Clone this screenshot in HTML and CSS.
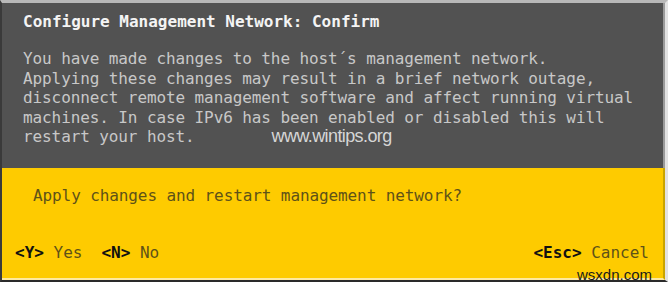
FILE: index.html
```html
<!DOCTYPE html>
<html lang="en">
<head>
    <meta charset="UTF-8">
    <title>Configure Management Network: Confirm</title>
    <link rel="stylesheet" href="styles.css">
</head>
<body>
    <div class="screen">
        <div class="info">
            <h1 class="title">Configure Management Network: Confirm</h1>
            <div class="message">
                <div>You have made changes to the host´s management network.</div>
                <div>Applying these changes may result in a brief network outage,</div>
                <div>disconnect remote management software and affect running virtual</div>
                <div>machines. In case IPv6 has been enabled or disabled this will</div>
                <div class="last">
                    <span>restart your host.</span>
                    <span class="mark">www.wintips.org</span>
                </div>
            </div>
        </div>
        <div class="confirm">
            <p class="question">Apply changes and restart management network?</p>
            <div class="actions">
                <div class="group">
                    <span class="action"><span class="key">&lt;Y&gt;</span> Yes</span>
                    <span class="action"><span class="key">&lt;N&gt;</span> No</span>
                </div>
                <span class="action"><span class="key">&lt;Esc&gt;</span> Cancel</span>
            </div>
            <div class="site">wsxdn.com</div>
        </div>
    </div>
</body>
</html>
```

FILE: styles.css
```css
* {
    box-sizing: border-box;
    margin: 0;
    padding: 0;
}
body {
    width: 668px;
    height: 282px;
    overflow: hidden;
    background: #2a2a2a;
    font-family: 'DejaVu Sans Mono', monospace;
    font-size: 16px;
}
.screen {
    display: flex;
    flex-direction: column;
    width: 668px;
    height: 282px;
    border-top: 3px solid #b8b8b8;
    border-left: 2px solid #3a3a3a;
    border-right: 3px solid #e2e2e2;
    border-bottom: 2px solid #2a2a2a;
}
.info {
    flex-shrink: 0;
    height: 165px;
    background: #525252;
    border-right: 2px solid #9a9a9a;
    padding: 9px 0 0 21px;
}
.title {
    font-size: 16px;
    font-weight: bold;
    color: #f4f4f4;
    line-height: 19px;
}
.message {
    margin-top: 18px;
    color: #c8c8c8;
    line-height: 19.5px;
    white-space: nowrap;
    letter-spacing: -0.1px;
}
.last {
    display: flex;
    align-items: baseline;
    height: 19.5px;
}
.mark {
    margin-left: 77px;
    font-family: 'Liberation Sans', Arial, sans-serif;
    font-size: 18px;
    color: #d6d6d6;
    letter-spacing: -0.6px;
}
.confirm {
    position: relative;
    flex: 1;
    display: flex;
    flex-direction: column;
    background: #fecb00;
    border-right: 2px solid #c9a400;
    border-bottom: 2px solid #fde9a0;
    padding: 18px 14px 0 13px;
}
.question {
    padding-left: 18px;
    color: #5e5218;
    line-height: 19px;
    letter-spacing: -0.1px;
}
.actions {
    display: flex;
    justify-content: space-between;
    margin-top: 38px;
    line-height: 19px;
    color: #5e5218;
}
.group {
    display: flex;
    gap: 19px;
}
.key {
    color: #111;
    font-weight: bold;
}
.site {
    position: absolute;
    right: 11px;
    bottom: -4px;
    font-family: 'Liberation Sans', Arial, sans-serif;
    font-size: 15px;
    line-height: 14px;
    color: #1a1a1a;
}
```
